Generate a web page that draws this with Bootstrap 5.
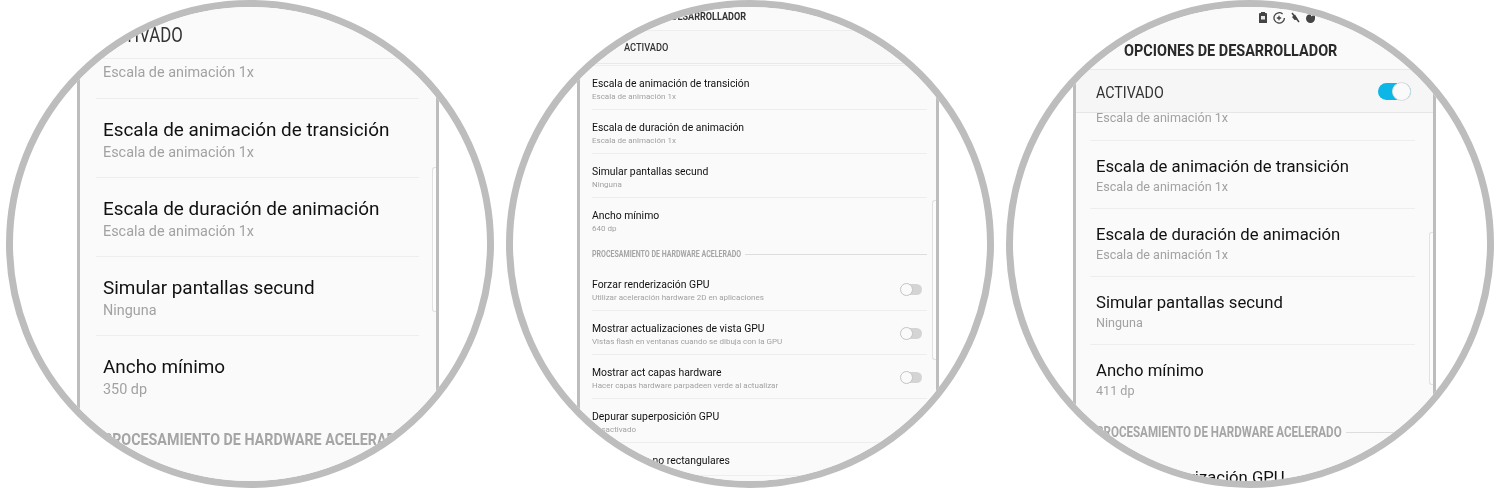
<!DOCTYPE html>
<html lang="es">
<head>
  <meta charset="UTF-8">
  <meta name="viewport" content="width=device-width, initial-scale=1.0">
  <title>Opciones de desarrollador</title>
  <link href="https://cdn.jsdelivr.net/npm/bootstrap@5.3.0/dist/css/bootstrap.min.css" rel="stylesheet">
  <script src="https://cdn.jsdelivr.net/npm/bootstrap@5.3.0/dist/js/bootstrap.bundle.min.js"></script>
  <style>
    body { background: #fff; width: 1500px; height: 488px; overflow: hidden; font-family: Roboto, "Liberation Sans", sans-serif; }
    .lupas { gap: 12px; padding: 0 6px; }
    .lupa { width: 488px; height: 488px; flex: none; border: 7px solid #bdbdbd; overflow: hidden; background: #fff; }
    .movil { height: 100%; border-left: 3px solid #bdbdbd; border-right: 3px solid #bdbdbd; background: #fafafa; position: relative; filter: blur(.3px); }
    .estrecho { display: inline-block; transform-origin: left center; transform: scaleX(.84); white-space: nowrap; }
    .fila { border-bottom: 1px solid #eee; color: #111; white-space: nowrap; }
    .tit { font-size: var(--ft); line-height: var(--lt); }
    .sub { font-size: var(--fs); line-height: var(--ls); color: #a2a2a2; }
    .barra { color: #333; }
    .seccion { color: #a5a5a5; font-weight: 700; white-space: nowrap; }
    .raya { height: 1px; background: #ddd; }
    .scroll { position: absolute; width: 4px; border: 1px solid #e2e2e2; border-right: 0; border-radius: 3px 0 0 3px; background: #fdfdfd; }

    /* izquierda */
    .z1 .movil { margin-left: 64px; width: 362px; }
    .z1 { --ft: 18.9px; --lt: 22px; --fs: 14.4px; --ls: 24px; }
    .z1 .barra { height: 52px; font-size: 20px; padding: 16px 0 0 23px; border-bottom: 1px solid #eee; line-height: 24px; }
    .z1 .fila { margin: 0 17px 0 16px; padding: 20px 0 12px 7px; }
    .z1 .fila.corte { padding: 2px 0 13px 7px; }
    .z1 .fila.fin { border-bottom: 0; padding-bottom: 13px; }
    .z1 .seccion { height: 50px; padding-left: 23px; font-size: 17px; }
    .z1 .scroll { right: 0; top: 160px; height: 145px; }

    /* centro */
    .z2 .movil { margin-left: 64px; width: 362px; }
    .z2 { --ft: 10.4px; --lt: 14px; --fs: 8px; --ls: 11px; }
    .z2 .cab { height: 24px; padding: 3px 0 0 32px; font-size: 10.8px; font-weight: 700; line-height: 14px; color: #333; border-bottom: 1px solid #eee; }
    .z2 .barra { height: 33px; font-size: 11px; font-weight: 500; padding: 10px 0 0 44px; line-height: 14px; background: #f8f8f8; border-bottom: 1px solid #e9e9e9; }
    .z2 .sep { height: 2px; border-bottom: 1px solid #eee; }
    .z2 .fila { margin: 0 9px 0 12px; padding: 11px 0 7px; }
    .z2 .fila.fin { border-bottom: 0; padding-bottom: 8px; }
    .z2 .seccion { height: 25px; margin: 0 9px 0 12px; font-size: 8.4px; }
    .z2 .raya { margin-left: -25px; }
    .z2 .scroll { right: 0; top: 193px; height: 160px; }
    .interr { width: 21px; height: 11px; border-radius: 6px; background: #d4d4d4; position: relative; margin: 0 5px 2px 0; }
    .interr::before { content: ""; position: absolute; left: -1px; top: -1px; width: 13px; height: 13px; border-radius: 50%; background: #fafafa; border: 1px solid #c4c4c4; }

    /* derecha */
    .z3 .movil { margin-left: 60px; width: 363px; }
    .z3 { --ft: 16.7px; --lt: 21px; --fs: 12.6px; --ls: 20px; }
    .z3 .estado { height: 22px; padding: 5px 0 0 183px; gap: 6px; }
    .z3 .estado svg { flex: none; }
    .z3 .cab { height: 41px; padding: 10px 0 0 48px; font-size: 17.2px; font-weight: 700; line-height: 22px; color: #2a2a2a; border-bottom: 1px solid #e9e9e9; }
    .z3 .barra { height: 43px; font-size: 17px; padding: 0 22px 0 20px; background: #f6f6f6; border-bottom: 1px solid #e6e6e6; }
    .z3 .barra .estrecho { padding-top: 3px; }
    .z3 .fila { margin: 0 18px 0 14px; padding: 15px 0 11px 6px; }
    .z3 .fila.corte { padding: 0 0 0 6px; height: 28px; }
    .z3 .fila.corte .sub { line-height: 10px; }
    .z3 .fila.fin { border-bottom: 0; padding-bottom: 12px; }
    .z3 .seccion { height: 38px; margin: 0 18px 0 14px; padding-left: 6px; font-size: 13.8px; }
    .z3 .raya { margin-left: -42px; }
    .z3 .fila.ultima { padding-top: 16px; border-bottom: 0; }
    .z3 .scroll { right: 0; top: 225px; height: 153px; }
    .activo { width: 33px; height: 17px; border-radius: 9px; background: #0cb6e6; position: relative; }
    .activo::after { content: ""; position: absolute; right: 0; top: -1px; width: 19px; height: 19px; border-radius: 50%; background: #fafafa; border: 1px solid #dcdcdc; }
  </style>
</head>
<body>
  <div class="d-flex lupas">

    <div class="lupa rounded-circle z1">
      <div class="movil">
        <div class="barra"><span class="estrecho">ACTIVADO</span></div>
        <div class="fila corte"><div class="sub">Escala de animación 1x</div></div>
        <div class="fila"><div class="tit">Escala de animación de transición</div><div class="sub">Escala de animación 1x</div></div>
        <div class="fila"><div class="tit">Escala de duración de animación</div><div class="sub">Escala de animación 1x</div></div>
        <div class="fila"><div class="tit">Simular pantallas secund</div><div class="sub">Ninguna</div></div>
        <div class="fila fin"><div class="tit">Ancho mínimo</div><div class="sub">350 dp</div></div>
        <div class="seccion d-flex align-items-center"><span class="estrecho">PROCESAMIENTO DE HARDWARE ACELERADO</span></div>
        <div class="scroll"></div>
      </div>
    </div>

    <div class="lupa rounded-circle z2">
      <div class="movil">
        <div class="cab"><span class="estrecho">OPCIONES DE DESARROLLADOR</span></div>
        <div class="barra"><span class="estrecho">ACTIVADO</span></div>
        <div class="sep"></div>
        <div class="fila"><div class="tit">Escala de animación de transición</div><div class="sub">Escala de animación 1x</div></div>
        <div class="fila"><div class="tit">Escala de duración de animación</div><div class="sub">Escala de animación 1x</div></div>
        <div class="fila"><div class="tit">Simular pantallas secund</div><div class="sub">Ninguna</div></div>
        <div class="fila fin"><div class="tit">Ancho mínimo</div><div class="sub">640 dp</div></div>
        <div class="seccion d-flex align-items-center">
          <span class="estrecho flex-shrink-0">PROCESAMIENTO DE HARDWARE ACELERADO</span>
          <span class="raya flex-grow-1"></span>
        </div>
        <div class="fila d-flex justify-content-between align-items-center"><div><div class="tit">Forzar renderización GPU</div><div class="sub">Utilizar aceleración hardware 2D en aplicaciones</div></div><span class="interr"></span></div>
        <div class="fila d-flex justify-content-between align-items-center"><div><div class="tit">Mostrar actualizaciones de vista GPU</div><div class="sub">Vistas flash en ventanas cuando se dibuja con la GPU</div></div><span class="interr"></span></div>
        <div class="fila d-flex justify-content-between align-items-center"><div><div class="tit">Mostrar act capas hardware</div><div class="sub">Hacer capas hardware parpadeen verde al actualizar</div></div><span class="interr"></span></div>
        <div class="fila"><div class="tit">Depurar superposición GPU</div><div class="sub">Desactivado</div></div>
        <div class="fila"><div class="tit">Operaciones no rectangulares</div></div>
        <div class="scroll"></div>
      </div>
    </div>

    <div class="lupa rounded-circle z3">
      <div class="movil">
        <div class="estado d-flex align-items-start">
          <svg width="8" height="11" viewBox="0 0 8 11"><path d="M2 0h4v1h1a1 1 0 0 1 1 1v9H0V2a1 1 0 0 1 1-1h1z" fill="#444"/><rect x="2" y="4" width="4" height="3.500" fill="#e8e8e8"/></svg>
          <svg width="12" height="12" viewBox="0 0 12 12" fill="none" stroke="#444" stroke-width="1.300"><path d="M9.600 2a5.200 5.200 0 1 0 1.800 4"/><path d="M6 3.800v4.400M3.800 6h4.400"/></svg>
          <svg width="9" height="11" viewBox="0 0 9 11"><path d="M1 5l3-2.500 3 5-3.500.5z" fill="#444"/><path d="M1 1l7 9" stroke="#444" stroke-width="1.500"/></svg>
          <svg width="9" height="11" viewBox="0 0 9 11"><path d="M4.500 2a4.500 4.500 0 1 0 4.500 4.500V3H7L5.500 4.500z" fill="#444"/></svg>
          <svg class="ms-1" width="6" height="9" viewBox="0 0 6 9"><path d="M1 1l2 3 2-3M3 4v4" fill="none" stroke="#ccc" stroke-width="1"/></svg>
        </div>
        <div class="cab"><span class="estrecho">OPCIONES DE DESARROLLADOR</span></div>
        <div class="barra d-flex justify-content-between align-items-center"><span class="estrecho">ACTIVADO</span><span class="activo"></span></div>
        <div class="fila corte"><div class="sub">Escala de animación 1x</div></div>
        <div class="fila"><div class="tit">Escala de animación de transición</div><div class="sub">Escala de animación 1x</div></div>
        <div class="fila"><div class="tit">Escala de duración de animación</div><div class="sub">Escala de animación 1x</div></div>
        <div class="fila"><div class="tit">Simular pantallas secund</div><div class="sub">Ninguna</div></div>
        <div class="fila fin"><div class="tit">Ancho mínimo</div><div class="sub">411 dp</div></div>
        <div class="seccion d-flex align-items-center">
          <span class="estrecho flex-shrink-0">PROCESAMIENTO DE HARDWARE ACELERADO</span>
          <span class="raya flex-grow-1"></span>
        </div>
        <div class="fila ultima"><div class="tit">Forzar renderización GPU</div></div>
        <div class="scroll"></div>
      </div>
    </div>

  </div>
</body>
</html>
